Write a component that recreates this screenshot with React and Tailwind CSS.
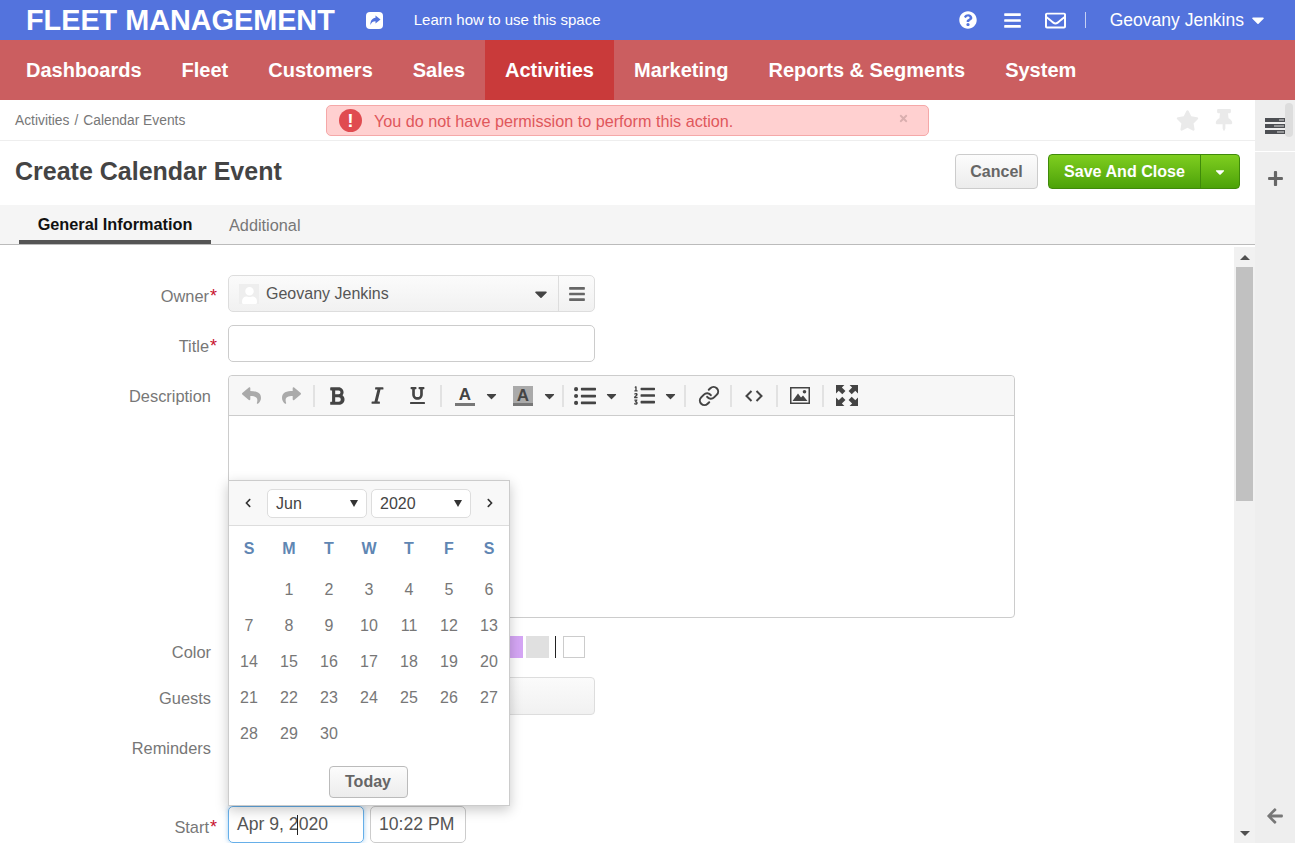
import React from "react";
import { Link as LinkIcon } from "lucide-react";
import {
  FaBars,
  FaBold,
  FaCaretDown,
  FaChevronLeft,
  FaChevronRight,
  FaItalic,
  FaListOl,
  FaListUl,
  FaPlus,
  FaArrowLeft,
  FaQuestionCircle,
  FaRegEnvelope,
  FaReply,
  FaShare,
  FaStar,
  FaThumbtack,
  FaTimes,
  FaUnderline,
  FaUser,
} from "react-icons/fa";

const navItems = ["Dashboards", "Fleet", "Customers", "Sales", "Activities", "Marketing", "Reports & Segments", "System"];
const weekDays = ["S", "M", "T", "W", "T", "F", "S"];
const days = ["", 1, 2, 3, 4, 5, 6, 7, 8, 9, 10, 11, 12, 13, 14, 15, 16, 17, 18, 19, 20, 21, 22, 23, 24, 25, 26, 27, 28, 29, 30];
const swatches = [
  "bg-[#f7b6b6]",
  "bg-[#f9cfa5]",
  "bg-[#f8ee9f]",
  "bg-[#d9eda0]",
  "bg-[#b9e8a8]",
  "bg-[#a9e4c8]",
  "bg-[#a9e4e4]",
  "bg-[#a8c8f5]",
  "bg-[#b4b4f5]",
  "bg-[#f5a6e0]",
  "bg-[#d5a6f5]",
  "bg-[#e0e0e0]",
];

function Label({ text, required, className = "" }) {
  return (
    <div className={`w-[211px] shrink-0 text-right text-[16.4px] leading-5 text-[#777] ${className}`}>
      {text}
      {required && <span className="inline-block w-[7px] mr-[-6px] ml-[1px] text-[18px] text-[#c8102e] leading-none">*</span>}
    </div>
  );
}

function Sep({ className = "" }) {
  return <div className={`w-[2px] h-[22px] bg-[#e2e2e2] shrink-0 ${className}`} />;
}

function ToolBtn({ children, className = "w-10" }) {
  return <div className={`h-full flex items-center justify-center text-[#444] shrink-0 ${className}`}>{children}</div>;
}

function Caret() {
  return (
    <ToolBtn className="w-[13px]">
      <FaCaretDown size={16} className="text-[#444]" />
    </ToolBtn>
  );
}

function ScrollArrow({ up }) {
  return (
    <div className="h-5 flex items-center justify-center">
      <div
        className={`w-0 h-0 border-l-[5px] border-r-[5px] border-l-transparent border-r-transparent ${
          up ? "border-b-[5px] border-b-[#505050]" : "border-t-[5px] border-t-[#505050]"
        }`}
      />
    </div>
  );
}

function MiniSelect({ value, className }) {
  return (
    <div className={`h-[29px] border border-[#ddd] rounded-[5px] bg-white flex items-center justify-between pl-[8px] pr-[8px] pt-[1px] text-[16px] text-[#444] ${className}`}>
      <span>{value}</span>
      <span className="w-0 h-0 border-l-[4px] border-r-[4px] border-t-[7px] border-l-transparent border-r-transparent border-t-[#333]" />
    </div>
  );
}

function CalendarPopup() {
  return (
    <div className="absolute left-[228px] top-[480px] w-[282px] h-[326px] bg-white border border-[#ccc] shadow-[0_4px_12px_rgba(0,0,0,0.22)] z-10">
      <div className="h-[45px] bg-[#f8f8f8] border-b border-[#ddd] flex items-center">
        <FaChevronLeft size={10} className="text-[#333] ml-[14px] mr-[14px]" />
        <MiniSelect value="Jun" className="w-[100px]" />
        <MiniSelect value="2020" className="w-[100px] ml-1" />
        <FaChevronRight size={10} className="text-[#333] ml-[14px]" />
      </div>
      <div className="grid grid-cols-7 h-[44px] items-center pt-[1px]">
        {weekDays.map((d, i) => (
          <div key={i} className="text-center text-[16px] font-bold text-[#5f86b3]">
            {d}
          </div>
        ))}
      </div>
      <div className="grid grid-cols-7 auto-rows-[36px] pt-[2px]">
        {days.map((d, i) => (
          <div key={i} className="flex items-center justify-center text-[16px] text-[#777]">
            {d}
          </div>
        ))}
      </div>
      <div className="flex justify-center mt-[14px] pr-[2px]">
        <button className="w-[79px] h-[32px] border border-[#bbb] rounded-[4px] bg-gradient-to-b from-[#fcfcfc] to-[#ececec] text-[16px] font-bold text-[#666]">
          Today
        </button>
      </div>
    </div>
  );
}

export default function App() {
  return (
    <div className="relative w-[1295px] h-[843px] overflow-hidden flex flex-col bg-white font-['Liberation_Sans',Arial,sans-serif]">
      {/* top bar */}
      <div className="h-10 shrink-0 bg-[#5373dd] flex items-center text-white">
        <div className="ml-[26px] text-[28.8px] font-bold leading-none">FLEET MANAGEMENT</div>
        <svg className="ml-[30px]" width="19" height="19" viewBox="0 0 19 19">
          <rect x="1" y="1" width="17" height="17" rx="4" fill="#fff" />
          <path d="M10.5 4.5 L15.5 8.5 L10.5 12.5 V10.2 C8 10.2 6.5 11.2 5.5 14 C5.2 10 7 7.2 10.5 6.8 Z" fill="#5373dd" />
        </svg>
        <div className="ml-[30px] text-[15px] pt-[1px]">Learn how to use this space</div>
        <div className="ml-auto flex items-center pr-[27px]">
          <FaQuestionCircle size={18} />
          <FaBars size={19} className="ml-[26px]" />
          <FaRegEnvelope size={21} className="ml-[23px]" />
          <div className="w-px h-[16px] bg-[#c5d0f3] ml-[19px]" />
          <div className="ml-[24px] text-[17.5px]">Geovany Jenkins</div>
          <FaCaretDown size={20} className="ml-[4px]" />
        </div>
      </div>

      {/* main nav */}
      <div className="h-[60px] shrink-0 bg-[#cb5e60] flex pl-[6px]">
        {navItems.map((item) => (
          <div
            key={item}
            className={`px-5 flex items-center text-[20px] font-bold text-white ${item === "Activities" ? "bg-[#c93a3a]" : ""}`}
          >
            {item}
          </div>
        ))}
      </div>

      <div className="flex-1 min-h-0 flex">
        <div className="w-[1255px] flex flex-col min-h-0">
          {/* breadcrumb */}
          <div className="h-[41px] shrink-0 border-b border-[#eee] flex items-center pl-[15px] text-[13.8px] text-[#777]">
            <span className="pt-[3px]">Activities</span>
            <span className="mx-[5px] pt-[3px]">/</span>
            <span className="pt-[3px]">Calendar Events</span>
            <div className="ml-auto flex items-center pr-[20px] text-[#eaeaea]">
              <FaStar size={23} />
              <FaThumbtack size={22} className="ml-[14px]" />
            </div>
          </div>

          {/* title row */}
          <div className="h-[64px] shrink-0 flex items-start pt-[13px] pl-[15px] pr-[15px]">
            <h1 className="text-[25px] font-bold text-[#444] leading-[35px]">Create Calendar Event</h1>
            <button className="ml-auto w-[83px] h-[35px] border border-[#ccc] rounded-[4px] bg-gradient-to-b from-[#fcfcfc] to-[#ececec] text-[16px] font-bold text-[#666]">
              Cancel
            </button>
            <div className="ml-[10px] flex w-[192px] h-[35px] rounded-[4px] border border-[#3f8a0a] bg-gradient-to-b from-[#7fce1f] to-[#4ca208] text-white">
              <div className="flex-1 flex items-center justify-center text-[16.1px] font-bold border-r border-[#3f8a0a]">Save And Close</div>
              <div className="w-[38px] flex items-center justify-center">
                <FaCaretDown size={14} />
              </div>
            </div>
          </div>

          {/* tabs */}
          <div className="h-10 shrink-0 bg-[#f5f5f5] border-b border-[#bbb] flex pl-[19px] text-[16.3px]">
            <div className="w-[192px] h-[39px] pt-[4px] flex items-center justify-center font-bold text-[#111] border-b-4 border-[#555]">General Information</div>
            <div className="ml-[18px] h-[39px] pt-[2px] flex items-center text-[#777]">Additional</div>
          </div>

          {/* form and its scrollbar */}
          <div className="flex-1 min-h-0 flex">
            <div className="flex-1 pt-[30px] overflow-hidden">
              <div className="flex">
                <Label text="Owner" required className="pt-[11px]" />
                <div className="ml-[17px] w-[367px] h-[37px] flex border border-[#ddd] rounded-[5px] bg-gradient-to-b from-[#fbfbfb] to-[#f1f1f1]">
                  <div className="flex-1 flex items-center pl-[10px] text-[16px] text-[#555]">
                    <div className="w-5 h-5 bg-[#eee] flex items-end justify-center overflow-hidden">
                      <FaUser size={17} className="text-white" />
                    </div>
                    <span className="ml-[7px] pt-[1px]">Geovany Jenkins</span>
                    <FaCaretDown size={20} className="ml-auto mr-[7px] text-[#444]" />
                  </div>
                  <div className="w-9 border-l border-[#ddd] flex items-center justify-center">
                    <FaBars size={18} className="text-[#666]" />
                  </div>
                </div>
              </div>

              <div className="flex mt-[13px]">
                <Label text="Title" required className="pt-[11px]" />
                <div className="ml-[17px] w-[367px] h-[37px] border border-[#ccc] rounded-[5px] bg-white" />
              </div>

              <div className="flex mt-[13px]">
                <Label text="Description" className="pt-[11px]" />
                <div className="ml-[17px] w-[787px] h-[243px] border border-[#ccc] rounded-[4px] bg-white">
                  <div className="h-10 bg-[#f7f7f7] border-b border-[#ccc] rounded-t-[4px] flex items-center pl-[2px]">
                    <ToolBtn><FaReply size={19} className="text-[#aaa]" /></ToolBtn>
                    <ToolBtn><FaShare size={19} className="text-[#aaa]" /></ToolBtn>
                    <Sep className="mx-[2px]" />
                    <ToolBtn><FaBold size={20} /></ToolBtn>
                    <ToolBtn><FaItalic size={19} /></ToolBtn>
                    <ToolBtn><FaUnderline size={17} /></ToolBtn>
                    <Sep className="mx-[3px]" />
                    <ToolBtn>
                      <div className="w-5 text-center text-[17px] font-bold leading-[17px] border-b-[3px] border-[#777]">A</div>
                    </ToolBtn>
                    <Caret />
                    <ToolBtn className="w-[40px] ml-[5px]">
                      <div className="w-5 h-[20px] bg-[#aaa] text-center text-[17px] font-bold leading-[19px] border-b-[3px] border-[#777]">A</div>
                    </ToolBtn>
                    <Caret />
                    <Sep className="ml-[6px] mr-[1px]" />
                    <ToolBtn><FaListUl size={22} /></ToolBtn>
                    <Caret />
                    <ToolBtn className="w-[40px] ml-[6px]"><FaListOl size={21} /></ToolBtn>
                    <Caret />
                    <Sep className="ml-[7px] mr-[3px]" />
                    <ToolBtn><LinkIcon size={22} strokeWidth={2.2} /></ToolBtn>
                    <Sep className="ml-[1px] mr-[1px]" />
                    <ToolBtn className="w-[42px]">
                      <svg width="18" height="12" viewBox="0 0 18 12" fill="none" stroke="#444" strokeWidth="2">
                        <path d="M6.5 1 L1.5 6 L6.5 11" />
                        <path d="M11.5 1 L16.5 6 L11.5 11" />
                      </svg>
                    </ToolBtn>
                    <Sep className="ml-[1px] mr-[1px]" />
                    <ToolBtn className="w-[42px]">
                      <svg width="20" height="17" viewBox="0 0 20 17">
                        <rect x="0.75" y="0.75" width="18.5" height="15.5" fill="none" stroke="#444" strokeWidth="1.5" />
                        <path d="M2.5 14 L8 6.5 L11 10.5 L13 8.5 L17.5 14 Z" fill="#444" />
                        <circle cx="14.5" cy="4.8" r="1.8" fill="#444" />
                      </svg>
                    </ToolBtn>
                    <Sep className="ml-[1px] mr-[1px]" />
                    <ToolBtn className="w-[44px]">
                      <svg width="22" height="21" viewBox="0 0 21 20" fill="#444">
                        <path d="M0 0 H8 L5.6 2.4 L9 5.8 L6 8.8 L2.6 5.4 L0 8 Z" />
                        <path d="M21 0 H13 L15.4 2.4 L12 5.8 L15 8.8 L18.4 5.4 L21 8 Z" />
                        <path d="M0 20 H8 L5.6 17.6 L9 14.2 L6 11.2 L2.6 14.6 L0 12 Z" />
                        <path d="M21 20 H13 L15.4 17.6 L12 14.2 L15 11.2 L18.4 14.6 L21 12 Z" />
                      </svg>
                    </ToolBtn>
                  </div>
                </div>
              </div>

              <div className="flex mt-[17px] h-[23px]">
                <Label text="Color" className="pt-[7px]" />
                <div className="ml-[29px] flex items-center gap-[3px]">
                  {swatches.map((c) => (
                    <div key={c} className={`w-[23px] h-[22px] ${c}`} />
                  ))}
                  <div className="w-px h-[22px] bg-[#222] mx-[3px]" />
                  <div className="w-[22px] h-[22px] border border-[#ccc] bg-white ml-[1px]" />
                </div>
              </div>

              <div className="flex mt-[19px]">
                <Label text="Guests" className="pt-[11px]" />
                <div className="ml-[17px] w-[367px] h-[38px] border border-[#ddd] rounded-[4px] bg-gradient-to-b from-[#fbfbfb] to-[#f1f1f1]" />
              </div>

              <div className="flex mt-[13px] h-[40px]">
                <Label text="Reminders" className="pt-[10px]" />
              </div>

              <div className="flex mt-[38px]">
                <Label text="Start" required className="pt-[11px]" />
                <div className="ml-[17px] w-[136px] h-[37px] border border-[#66afe9] rounded-[5px] shadow-[0_0_5px_rgba(102,175,233,0.6)] flex items-center pl-2 text-[17.6px] text-[#555]">
                  Apr 9, 2<span className="inline-block w-px h-[20px] bg-[#222] ml-[-2px] mr-[1px]" />020
                </div>
                <div className="ml-[6px] w-[96px] h-[37px] border border-[#ccc] rounded-[5px] flex items-center pl-2 text-[17.6px] text-[#555]">10:22 PM</div>
              </div>
            </div>

            <div className="w-[21px] shrink-0 bg-[#f1f1f1] flex flex-col mt-[2px]">
              <ScrollArrow up />
              <div className="mx-[2px] h-[234px] bg-[#c1c1c1]" />
              <div className="flex-1" />
              <ScrollArrow />
            </div>
          </div>
        </div>

        {/* right sidebar */}
        <div className="relative w-10 shrink-0 bg-[#eee] flex flex-col items-center">
          <div className="absolute right-[2px] top-[3px] w-2 h-[34px] rounded bg-[#ddd]" />
          <div className="h-[52px] w-full border-b border-white flex items-center justify-center">
            <svg width="20" height="16" viewBox="0 0 20 16">
              <rect y="0" width="20" height="4" fill="#4d4f53" />
              <rect y="6" width="20" height="4" fill="#4d4f53" />
              <rect y="12" width="20" height="4" fill="#4d4f53" />
              <rect x="14" y="1.5" width="5" height="1" fill="#ddd" />
              <rect x="9" y="7.5" width="10" height="1" fill="#ddd" />
              <rect x="12" y="13.5" width="7" height="1" fill="#ddd" />
            </svg>
          </div>
          <FaPlus size={17} className="text-[#666] mt-[18px]" />
          <FaArrowLeft size={18} className="text-[#777] mt-auto mb-[18px]" />
        </div>
      </div>

      {/* overlays */}
      <div className="absolute left-[326px] top-[105px] w-[603px] h-[31px] bg-[#ffd0d0] border border-[#f5a8a8] rounded-[5px] flex items-center text-[16.2px] text-[#e0575b]">
        <div className="ml-[12px] w-[23px] h-[23px] rounded-full bg-[#e04b50] flex items-center justify-center text-white font-bold text-[19px] leading-none">!</div>
        <span className="ml-[12px] pt-[2px]">You do not have permission to perform this action.</span>
        <FaTimes size={11} className="ml-auto mr-[19px] mb-[5px] text-[#d9aeae]" />
      </div>
      <CalendarPopup />
    </div>
  );
}
